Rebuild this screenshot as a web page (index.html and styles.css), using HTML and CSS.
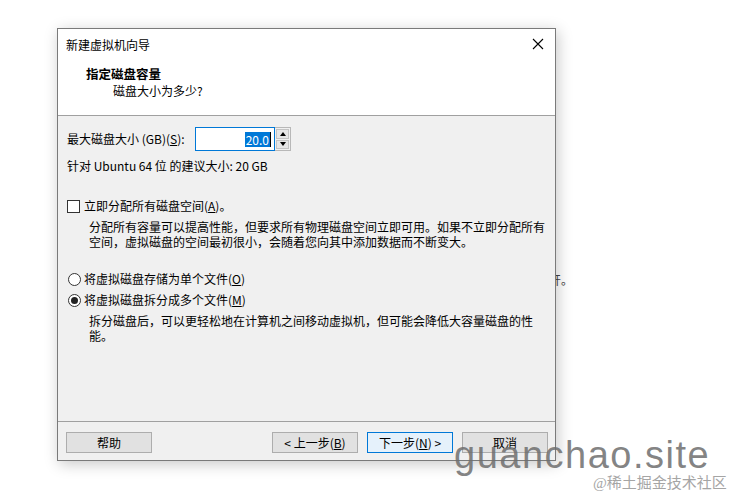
FILE: index.html
```html
<!DOCTYPE html>
<html lang="zh-CN">
<head>
    <meta charset="UTF-8">
    <title>新建虚拟机向导</title>
    <link rel="stylesheet" href="styles.css">
</head>
<body>
<div class="desk">
    <p class="behind">开。</p>

    <div class="dialog">
        <div class="titlebar">
            <span>新建虚拟机向导</span>
            <svg class="close" width="12" height="12" viewBox="0 0 12 12">
                <path d="M1 1L11 11M11 1L1 11" stroke="#000" stroke-width="1.1" fill="none"/>
            </svg>
        </div>

        <div class="header">
            <h1>指定磁盘容量</h1>
            <p>磁盘大小为多少?</p>
        </div>

        <div class="content">
            <div class="size-row">
                <label>最大磁盘大小 (GB)(<u>S</u>):</label>
                <div class="spin">
                    <div class="spin-input"><span class="sel">20.0</span><i class="caret"></i></div>
                    <div class="spin-btns">
                        <span class="up"></span>
                        <span class="down"></span>
                    </div>
                </div>
            </div>
            <p class="hint">针对 Ubuntu 64 位 的建议大小: 20 GB</p>

            <div class="check"><span class="box"></span>立即分配所有磁盘空间(<u>A</u>)。</div>
            <div class="note">
                <p>分配所有容量可以提高性能，但要求所有物理磁盘空间立即可用。如果不立即分配所有</p>
                <p>空间，虚拟磁盘的空间最初很小，会随着您向其中添加数据而不断变大。</p>
            </div>

            <div class="radio first"><span class="dot"></span>将虚拟磁盘存储为单个文件(<u>O</u>)</div>
            <div class="radio on"><span class="dot"></span>将虚拟磁盘拆分成多个文件(<u>M</u>)</div>
            <div class="note">
                <p>拆分磁盘后，可以更轻松地在计算机之间移动虚拟机，但可能会降低大容量磁盘的性</p>
                <p>能。</p>
            </div>
        </div>

        <div class="footer">
            <button class="btn">帮助</button>
            <span class="spacer"></span>
            <button class="btn">&lt; 上一步(<u>B</u>)</button>
            <button class="btn default">下一步(<u>N</u>) &gt;</button>
            <button class="btn">取消</button>
        </div>
    </div>

    <div class="mark">guanchao.site</div>
    <div class="mark-sub">@稀土掘金技术社区</div>
</div>
</body>
</html>
```

FILE: styles.css
```css
* {
    padding: 0;
    margin: 0;
    box-sizing: border-box;
}

body {
    background: #fff;
    font-family: "Noto Sans CJK SC", "Microsoft YaHei", sans-serif;
    font-size: 12px;
    color: #000;
}

.desk {
    position: relative;
    width: 736px;
    height: 497px;
    overflow: hidden;
    padding: 28px 0 0 57px;
}

/* text of the page behind the dialog, only its tail shows */
.behind {
    position: absolute;
    left: 549px;
    top: 272px;
    line-height: 16px;
    color: #444;
}

.dialog {
    position: relative;
    width: 499px;
    height: 433px;
    border: 1px solid #7a7a7a;
    background: #f0f0f0;
    display: flex;
    flex-direction: column;
    box-shadow: 2px 3px 14px rgba(0, 0, 0, 0.22);
}

.titlebar {
    height: 29px;
    background: #fff;
    display: flex;
    align-items: center;
    justify-content: space-between;
    padding: 1px 10px 0 8px;
}

.close {
    margin-right: 1px;
}

.header {
    height: 58px;
    background: #fff;
    border-bottom: 1px solid #a0a0a0;
    padding: 7px 0 0 28px;
}

.header h1 {
    font-size: 12.5px;
    font-weight: bold;
    line-height: 17px;
}

.header p {
    line-height: 17px;
    padding-left: 27px;
}

.content {
    flex: 1;
    padding: 11px 0 0 9px;
}

.size-row {
    display: flex;
    align-items: center;
    height: 24px;
}

.size-row label {
    width: 128px;
    line-height: 16px;
}

.spin {
    display: flex;
    height: 24px;
}

.spin-input {
    width: 80px;
    height: 24px;
    border: 1px solid #0078d7;
    background: #fff;
    display: flex;
    align-items: center;
    justify-content: flex-end;
    padding-right: 3px;
}

.sel {
    background: #0078d7;
    color: #fff;
    line-height: 15px;
    padding: 0 1px;
}

.caret {
    width: 1px;
    height: 15px;
    background: #000;
}

.spin-btns {
    width: 16px;
    border: 1px solid #b8b8b8;
    border-left: 0;
    background: #f0f0f0;
    display: flex;
    flex-direction: column;
    padding: 1px;
    gap: 1px;
}

.spin-btns span {
    flex: 1;
    background: #e6e6e6;
    border: 1px solid #c4c4c4;
    display: flex;
    align-items: center;
    justify-content: center;
}

.spin-btns .up::before {
    content: "";
    border-left: 3px solid transparent;
    border-right: 3px solid transparent;
    border-bottom: 4px solid #000;
}

.spin-btns .down::before {
    content: "";
    border-left: 3px solid transparent;
    border-right: 3px solid transparent;
    border-top: 4px solid #000;
}

.hint {
    margin-top: 7px;
    line-height: 16px;
}

.check,
.radio {
    display: flex;
    align-items: center;
    line-height: 16px;
}

.check {
    margin-top: 24px;
}

.check .box {
    width: 13px;
    height: 13px;
    border: 1px solid #333;
    background: #fff;
    margin-right: 4px;
}

.note {
    margin: 5px 0 0 22px;
}

.note p {
    height: 15px;
    line-height: 15px;
}

.radio.first {
    margin-top: 22px;
}

.radio.on {
    margin-top: 5px;
}

.radio .dot {
    width: 13px;
    height: 13px;
    border: 1px solid #333;
    border-radius: 50%;
    background: #fff;
    margin: 0 3px 0 1px;
    display: flex;
    align-items: center;
    justify-content: center;
}

.radio.on .dot::before {
    content: "";
    width: 7px;
    height: 7px;
    border-radius: 50%;
    background: #222;
}

.footer {
    border-top: 1px solid #a0a0a0;
    padding: 10px 7px 0 8px;
    height: 39px;
    display: flex;
}

.spacer {
    flex: 1;
}

.btn {
    width: 86px;
    height: 21px;
    border: 1px solid #adadad;
    background: #e1e1e1;
    font-family: inherit;
    font-size: 12px;
    color: #000;
    line-height: 18px;
}

.btn + .btn {
    margin-left: 9px;
}

.btn.default {
    border-color: #0078d7;
    background: #e5f1fb;
}

/* picture watermark laid over the screenshot */
.mark {
    position: absolute;
    left: 454px;
    top: 435px;
    font-family: "Liberation Sans", Arial, sans-serif;
    font-size: 38px;
    letter-spacing: 1.5px;
    line-height: 40px;
    color: rgba(110, 110, 110, 0.85);
}

.mark-sub {
    position: absolute;
    left: 593px;
    top: 474px;
    font-family: "Liberation Serif", "Noto Sans CJK SC", serif;
    font-size: 15px;
    line-height: 18px;
    color: #a5a5a5;
}
```
